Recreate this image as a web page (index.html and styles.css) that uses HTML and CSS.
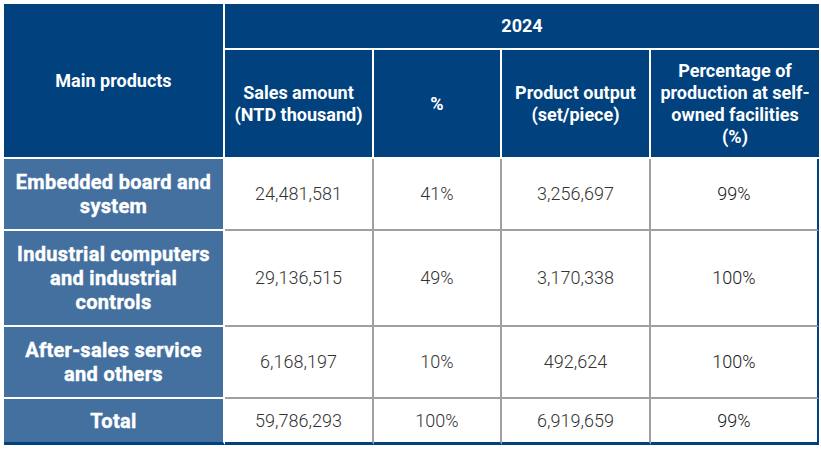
FILE: index.html
```html
<!DOCTYPE html>
<html lang="en">
<head>
<meta charset="utf-8">
<title>Main products 2024</title>
<link rel="stylesheet" href="styles.css">
</head>
<body>
<table class="prod">
  <colgroup>
    <col class="c1"><col class="c2"><col class="c3"><col class="c4"><col class="c5">
  </colgroup>
  <thead>
    <tr class="h1">
      <th class="hd corner" rowspan="2">Main products</th>
      <th class="hd year" colspan="4">2024</th>
    </tr>
    <tr class="h2">
      <th class="hd">Sales amount<br>(NTD thousand)</th>
      <th class="hd">%</th>
      <th class="hd">Product output<br>(set/piece)</th>
      <th class="hd last">Percentage of<br>production at self-<br>owned facilities<br>(%)</th>
    </tr>
  </thead>
  <tbody>
    <tr class="r1">
      <th class="rh">Embedded board and<br>system</th>
      <td>24,481,581</td><td>41%</td><td>3,256,697</td><td class="last">99%</td>
    </tr>
    <tr class="r2">
      <th class="rh">Industrial computers<br>and industrial<br>controls</th>
      <td>29,136,515</td><td>49%</td><td>3,170,338</td><td class="last">100%</td>
    </tr>
    <tr class="r3">
      <th class="rh">After-sales service<br>and others</th>
      <td>6,168,197</td><td>10%</td><td>492,624</td><td class="last">100%</td>
    </tr>
    <tr class="tot">
      <th class="rh">Total</th>
      <td>59,786,293</td><td>100%</td><td>6,919,659</td><td class="last">99%</td>
    </tr>
  </tbody>
</table>
</body>
</html>
```

FILE: styles.css
```css
html, body {
  margin: 0;
  padding: 0;
  background: #ffffff;
}
body {
  padding: 4px 0 0 4px;
  font-family: Roboto, "Liberation Sans", Arial, sans-serif;
}
.prod {
  border-collapse: separate;
  border-spacing: 0;
  table-layout: fixed;
  width: 815px;
}
.c1 { width: 221px; }
.c2 { width: 149px; }
.c3 { width: 128px; }
.c4 { width: 149px; }
.c5 { width: 168px; }

.prod th, .prod td {
  box-sizing: border-box;
  padding: 0 2px;
  text-align: center;
  vertical-align: middle;
  white-space: nowrap;
}
.hd {
  background: #00417e;
  color: #ffffff;
  font-weight: 700;
  font-size: 18px;
  line-height: 22px;
  border-right: 2px solid #ffffff;
  border-bottom: 2px solid #ffffff;
}
.hd.last, .hd.year { border-right: 0; }
.h1 { height: 46px; }
.h2 { height: 109px; }
.corner { padding-top: 8px; }

.rh {
  background: #4470a0;
  color: #ffffff;
  font-weight: 700;
  font-size: 20px;
  letter-spacing: 0.3px;
  -webkit-text-stroke: 0.4px #ffffff;
  line-height: 24px;
  border-right: 2px solid #ffffff;
  border-bottom: 2px solid #ffffff;
}
.prod td {
  color: #333333;
  font-weight: 300;
  font-size: 18px;
  line-height: 22px;
  border-right: 2px solid #a0a0a0;
  border-bottom: 2px solid #a0a0a0;
}
.prod td.last {
  border-right: 2px solid #00417e;
  color: #1a1a1a;
}
.r1 { height: 72px; }
.r2 { height: 96px; }
.r3 { height: 72px; }
.tot { height: 46px; }
.tot th, .tot td, .tot td.last {
  border-bottom: 3px solid #00417e;
}
```
